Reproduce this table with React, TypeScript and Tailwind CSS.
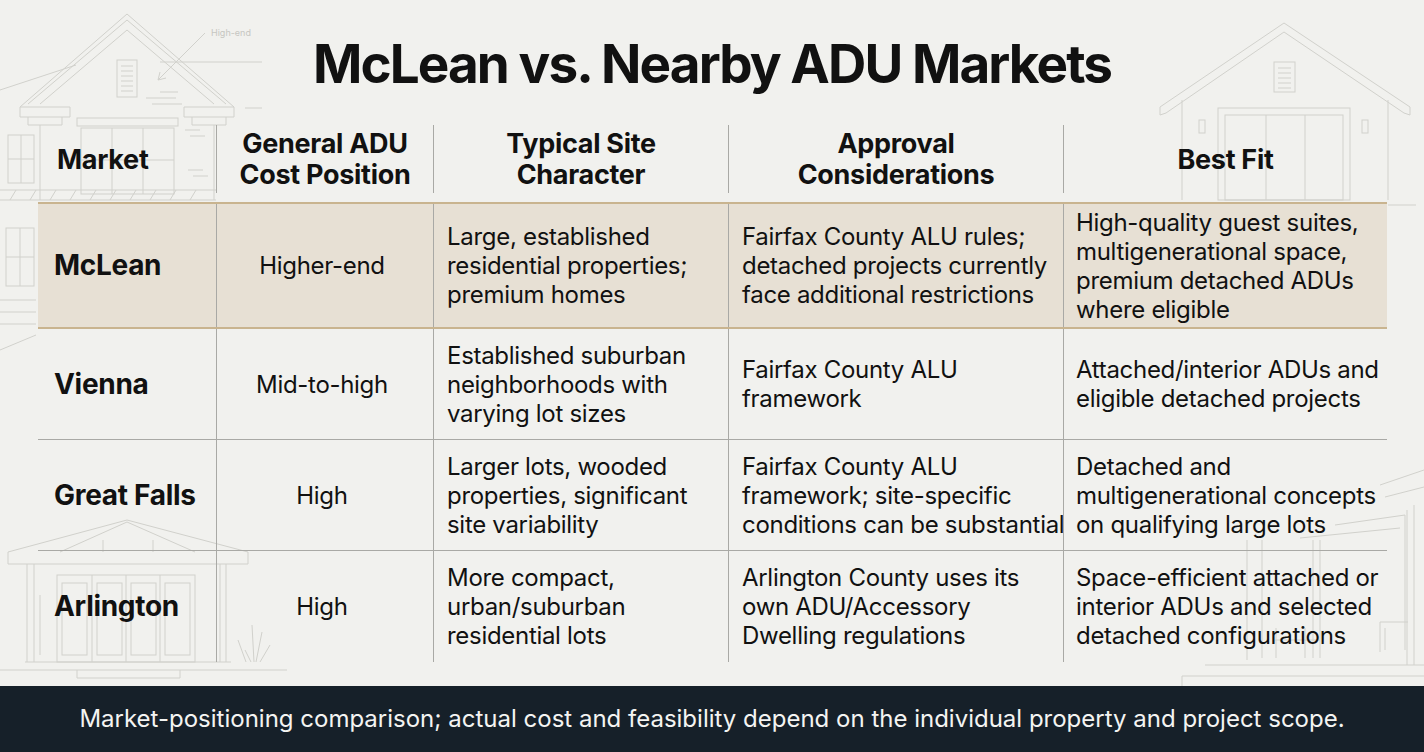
import React from "react";

type Row = {
  market: string;
  cost: string;
  site: string[];
  approval: string[];
  fit: string[];
  highlight?: boolean;
};

const ROWS: Row[] = [
  {
    market: "McLean",
    cost: "Higher-end",
    site: ["Large, established", "residential properties;", "premium homes"],
    approval: ["Fairfax County ALU rules;", "detached projects currently", "face additional restrictions"],
    fit: ["High-quality guest suites,", "multigenerational space,", "premium detached ADUs", "where eligible"],
    highlight: true,
  },
  {
    market: "Vienna",
    cost: "Mid-to-high",
    site: ["Established suburban", "neighborhoods with", "varying lot sizes"],
    approval: ["Fairfax County ALU", "framework"],
    fit: ["Attached/interior ADUs and", "eligible detached projects"],
  },
  {
    market: "Great Falls",
    cost: "High",
    site: ["Larger lots, wooded", "properties, significant", "site variability"],
    approval: ["Fairfax County ALU", "framework; site-specific", "conditions can be substantial"],
    fit: ["Detached and", "multigenerational concepts", "on qualifying large lots"],
  },
  {
    market: "Arlington",
    cost: "High",
    site: ["More compact,", "urban/suburban", "residential lots"],
    approval: ["Arlington County uses its", "own ADU/Accessory", "Dwelling regulations"],
    fit: ["Space-efficient attached or", "interior ADUs and selected", "detached configurations"],
  },
];

const COLS = "grid grid-cols-[178px_217px_295px_335px_324px]";

function Lines({ lines }: { lines: string[] }) {
  return (
    <div className="whitespace-nowrap">
      {lines.map((l) => (
        <div key={l}>{l}</div>
      ))}
    </div>
  );
}

// faint architectural line drawings behind the table
function Sketches() {
  const s = { stroke: "#d1d1cc", strokeWidth: 1, fill: "none" } as const;
  return (
    <svg className="absolute left-0 top-0 pointer-events-none" width="1424" height="686" viewBox="0 0 1424 686">
      <g {...s}>
        {/* left upper house */}
        <path d="M20 107 L127 14 L234 107" />
        <path d="M28 104 L127 20 L226 104" />
        <path d="M40 104 L127 30 L214 104" />
        <path d="M20 107 h50 v10 h-50 z M184 107 h50 v10 h-50 z" />
        <path d="M28 117 v8 h34 v-8 M192 117 v8 h34 v-8" />
        <rect x="117" y="60" width="20" height="37" />
        <path d="M121 66 h12 M121 71 h12 M121 76 h12 M121 81 h12 M121 86 h12 M121 91 h12" />
        <path d="M146 98 h30 M152 104 h30 M160 92 h18 M185 130 h15 M190 136 h15 M188 170 h15 M193 176 h15" />
        <rect x="77" y="118" width="101" height="8" />
        <rect x="81" y="128" width="93" height="66" />
        <path d="M112 128 v66 M143 128 v66 M81 160 h93" />
        <path d="M0 90 L76 65" />
        <path d="M40 125 v75 M214 125 v75" />
        <rect x="8" y="135" width="26" height="48" />
        <path d="M21 135 v48 M8 159 h26" />
        <path d="M0 190 h216 M0 200 h216" />
        <path d="M10 200 l6 -10 M30 200 l6 -10 M50 200 l6 -10 M70 200 l6 -10 M90 200 l6 -10 M110 200 l6 -10 M130 200 l6 -10 M150 200 l6 -10 M170 200 l6 -10 M190 200 l6 -10" />
        <rect x="6" y="228" width="28" height="58" />
        <path d="M20 228 v58 M6 257 h28" />
        <path d="M0 300 h36 M0 312 h36 M0 324 h36" />
        <path d="M0 350 L36 335" />
        <path d="M160 62 h102 M245 108 h17" />
        <path d="M205 33 L158 80 M158 80 l2 -8 M158 80 l8 -2" />
        {/* right upper house */}
        <path d="M1160 107 L1284 23 L1410 107" />
        <path d="M1166 113 L1284 32 L1404 113" />
        <path d="M1160 107 v8 l6 -2 M1410 107 v8 l-6 -2" />
        <path d="M1182 100 v100 M1388 100 v100" />
        <rect x="1274" y="62" width="21" height="30" />
        <path d="M1278 68 h13 M1278 73 h13 M1278 78 h13 M1278 83 h13 M1278 88 h13" />
        <rect x="1218" y="108" width="132" height="92" />
        <rect x="1225" y="115" width="118" height="85" />
        <path d="M1266 115 v85 M1305 115 v85" />
        <rect x="1199" y="120" width="6" height="13" />
        <rect x="1362" y="120" width="6" height="13" />
        <path d="M1388 205 h28" />
        {/* left lower small house */}
        <path d="M8 552 L127 520 L248 552" />
        <path d="M8 552 v12 h240 v-12" />
        <path d="M60 552 L127 522 L195 552" />
        <path d="M103 540 v12 M153 540 v12" />
        <path d="M27 564 v98 M34 564 v98 M220 564 v98 M226 564 v98" />
        <rect x="57" y="575" width="138" height="87" />
        <path d="M92 575 v87 M126 575 v87 M160 575 v87" />
        <rect x="62" y="583" width="25" height="72" />
        <rect x="97" y="583" width="25" height="72" />
        <rect x="131" y="583" width="25" height="72" />
        <rect x="165" y="583" width="25" height="72" />
        <path d="M25 662 h206 M0 670 h287" />
        <path d="M77 670 v8 h103 v-8" />
        <path d="M40 595 v60" />
        <path d="M238 640 l8 22 M252 625 l2 37 M262 632 l-6 30 M270 645 l-10 17 M245 650 l6 12" />
        {/* right lower */}
        <path d="M1380 485 L1424 470 M1385 497 L1424 487" />
        <path d="M1414 505 v160 M1407 510 v155" />
        <path d="M1335 525 L1405 515 v135 M1300 538 L1400 528" />
        <path d="M1247 540 v120 M1262 540 v118 M1313 540 v118 M1320 540 v118" />
        <path d="M1275 640 h45 M1276 628 v30 M1305 628 v30" />
        <path d="M1380 622 h28 M1380 622 v30 M1385 628 v22" />
        <path d="M1205 665 h219 M1182 676 h242 M1182 676 v10" />
      </g>
      <text x="211" y="36" fill="#c6c6c1" fontSize="9" fontFamily="Inter, sans-serif">High-end</text>
    </svg>
  );
}

export default function App() {
  return (
    <div className="relative w-[1424px] h-[752px] overflow-hidden bg-[#f1f1ee] text-[#111111] font-['Inter','Noto_Sans',sans-serif]">
      <Sketches />
      <div className="relative flex flex-col h-full">
        <h1 className="h-[125px] flex items-center justify-center pt-[4px] text-[53px] font-bold tracking-[-1.9px]">
          McLean vs. Nearby ADU Markets
        </h1>

        <div className="ml-[38px] w-[1349px]">
          {/* header */}
          <div className={`${COLS} h-[77px] pb-[9px] text-[27px] font-bold leading-[31px] tracking-[-0.3px]`}>
            <div className="flex items-center pl-[19px]">Market</div>
            <div className="flex items-center justify-center text-center border-l border-[#a9a9a5]">
              General ADU<br />Cost Position
            </div>
            <div className="flex items-center justify-center text-center border-l border-[#a9a9a5]">
              Typical Site<br />Character
            </div>
            <div className="flex items-center justify-center text-center border-l border-[#a9a9a5]">
              Approval<br />Considerations
            </div>
            <div className="flex items-center justify-center text-center border-l border-[#a9a9a5]">Best Fit</div>
          </div>

          {ROWS.map((r, i) => (
            <div
              key={r.market}
              className={`${COLS} text-[24px] leading-[29px] tracking-[-0.3px] ${
                r.highlight
                  ? "h-[127px] bg-[#e7e0d4] border-y-2 border-[#c9b48f]"
                  : i === ROWS.length - 1
                  ? "h-[111px]"
                  : "h-[111px] border-b border-[#a9a9a5]"
              }`}
            >
              <div className="flex items-center pl-4 text-[28px] font-bold">{r.market}</div>
              <div className="flex items-center justify-center pr-[6px] border-l border-[#a9a9a5]">{r.cost}</div>
              <div className="flex items-center pl-[13px] border-l border-[#a9a9a5]">
                <Lines lines={r.site} />
              </div>
              <div className="flex items-center pl-[13px] border-l border-[#a9a9a5]">
                <Lines lines={r.approval} />
              </div>
              <div className="flex items-center pl-[12px] border-l border-[#a9a9a5]">
                <Lines lines={r.fit} />
              </div>
            </div>
          ))}
        </div>

        <footer className="mt-auto h-[66px] bg-[#162029] flex items-center justify-center text-[#f4f4f2] text-[24px]">
          Market-positioning comparison; actual cost and feasibility depend on the individual property and project scope.
        </footer>
      </div>
    </div>
  );
}
